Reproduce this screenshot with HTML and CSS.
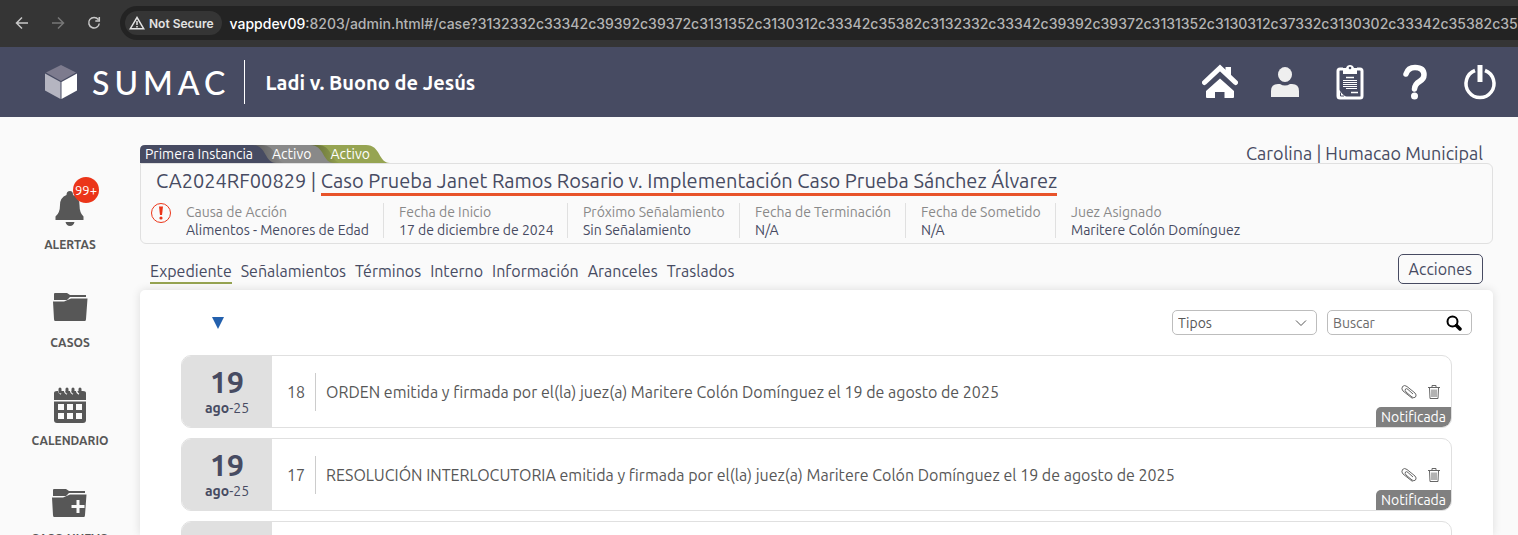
FILE: index.html
```
<!DOCTYPE html>
<html lang="es">
<head>
  <meta charset="utf-8">
  <meta name="viewport" content="width=device-width, initial-scale=1">
  <title>SUMAC</title>
  <link rel="stylesheet" href="styles.css">
</head>
<body>
  <div class="browser-bar">
    <button class="browser-btn" aria-label="Back">
      <svg width="16" height="16" viewBox="0 0 16 16"><path d="M14 8H3M8 2.500L2.500 8L8 13.500"/></svg>
    </button>
    <button class="browser-btn disabled" aria-label="Forward">
      <svg width="16" height="16" viewBox="0 0 16 16"><path d="M2 8H13M8 2.500L13.500 8L8 13.500"/></svg>
    </button>
    <button class="browser-btn" aria-label="Reload">
      <svg width="16" height="16" viewBox="0 0 16 16"><path d="M12.300 4.500A5.300 5.300 0 1 0 13.300 8.500M13.300 2V6H9.300"/></svg>
    </button>
    <div class="address">
      <button class="security">
        <svg width="16" height="14" viewBox="0 0 16 14"><path d="M8 1.500L14.700 12.700H1.300Z"/><path d="M8 5V9M8 10V11.500"/></svg>
        Not Secure
      </button>
      <span class="url"><span class="host">vappdev09</span>:8203/admin.html#/case?3132332c33342c39392c39372c3131352c3130312c33342c35382c3132332c33342c39392c39372c3131352c3130312c37332c3130302c33342c35382c353</span>
    </div>
  </div>

  <header class="header">
    <a href="#" class="logo">
      <svg width="34" height="36" viewBox="0 0 34 36">
        <path d="M17 1L32 8.500L17 17L2 8.500Z" fill="#7d7b8e"/>
        <path d="M1 9.500L16.500 18V35L1 26.500Z" fill="#b5b5c1"/>
        <path d="M33 9.500L17.500 18V35L33 26.500Z" fill="#fff"/>
      </svg>
      <span class="logo-text">SUMAC</span>
    </a>
    <h1 class="header-title">Ladi v. Buono de Jesús</h1>
    <nav class="header-nav">
      <a href="#" aria-label="Inicio">
        <svg width="36" height="36" viewBox="0 0 36 36">
          <path d="M2.500 18.500L18 4L33.500 18.500" fill="none" stroke="#fff" stroke-width="5" stroke-linecap="round"/>
          <path d="M23.500 3H29V12L23.500 7Z" fill="#fff"/>
          <path d="M18 14.500L32 27V33Q32 34 31 34H22.500V28H13V34H5Q4 34 4 33V27Z" fill="#fff"/>
        </svg>
      </a>
      <a href="#" aria-label="Perfil">
        <svg width="36" height="36" viewBox="0 0 36 36" fill="#efefef">
          <ellipse cx="18" cy="10.500" rx="7" ry="7.500"/>
          <path d="M4 33V27Q4 20 11 20H13Q18 23 23 20H25Q32 20 32 27V33Z"/>
        </svg>
      </a>
      <a href="#" aria-label="Tareas">
        <svg width="36" height="36" viewBox="0 0 36 36" fill="none" stroke="#fff">
          <path d="M11 5H8Q6 5 6 7V32Q6 34 8 34H28Q30 34 30 32V7Q30 5 28 5H25" stroke-width="3"/>
          <path d="M11 10V4H14Q15 1 18 1Q21 1 22 4H25V10Z" fill="#fff" stroke="none"/>
          <circle cx="18" cy="4" r="1.300" fill="#474b62" stroke="none"/>
          <path d="M14 13.500H22M19 28.500H26" stroke-width="1.500"/>
          <path d="M11 16.500H25M11 18.500H25M11 20.500H25M11 22.500H25M14 24.500H25"/>
          <path d="M6 24Q10 31 16 34H6Z" fill="#fff" stroke="none"/>
          <path d="M8.500 28.500V32H12" stroke="#474b62"/>
        </svg>
      </a>
      <a href="#" aria-label="Ayuda">
        <svg width="36" height="36" viewBox="0 0 36 36">
          <path d="M9 10Q11 3.500 18 3.500Q27 3.500 27 11Q27 15 22.500 17.500Q18 20 17.500 25" fill="none" stroke="#fff" stroke-width="5.500" stroke-linecap="round"/>
          <circle cx="17.500" cy="32" r="3.500" fill="#fff"/>
        </svg>
      </a>
      <a href="#" aria-label="Salir">
        <svg width="36" height="36" viewBox="0 0 36 36" fill="none" stroke="#fff">
          <path d="M13 6.500A14 14 0 1 0 23 6.500" stroke-width="3.500"/>
          <path d="M18 1V18" stroke-width="5"/>
        </svg>
      </a>
    </nav>
  </header>

  <div class="layout">
    <nav class="sidebar">
      <a href="#" class="side-link">
        <span class="side-icon">
          <svg width="36" height="40" viewBox="0 0 36 40" fill="#575757">
            <path d="M14.500 6Q14.500 2 18 2Q21 2 21 6Q27.500 8.500 27.500 16Q27.500 24 31.500 27.500V31H3.500V27.500Q8 24 8 16Q8 8.500 14.500 6Z"/>
            <path d="M13.500 33H22.500Q21.500 37 18 37Q14.500 37 13.500 33Z"/>
          </svg>
          <span class="alert-count">99+</span>
        </span>
        ALERTAS
      </a>
      <a href="#" class="side-link">
        <span class="side-icon">
          <svg width="36" height="40" viewBox="0 0 36 40" fill="#575757">
            <path d="M2 13V7Q2 6 3 6H15L18 8H34V10H18L15 13Z"/>
            <path d="M1 14.500H12L19 11.500H35.500L34 32Q34 34 33 34H3Q2 34 2 32Z"/>
          </svg>
        </span>
        CASOS
      </a>
      <a href="#" class="side-link">
        <span class="side-icon">
          <svg width="36" height="40" viewBox="0 0 36 40">
            <path d="M2 15V8Q2 6 5 6H31Q34 6 34 8V15Z" fill="#575757"/>
            <path d="M2 16.500H34V35Q34 38 31 38H5Q2 38 2 35Z" fill="#575757"/>
            <path d="M9 9Q5 7 8 3.500M15 9Q11 7 14 3.500M21 9Q17 7 20 3.500M27 9Q23 7 26 3.500" fill="none" stroke="#fafafa" stroke-width="1.500"/>
            <path d="M8 7V4M15 7V4M21 7V4M28 7V4" fill="none" stroke="#575757" stroke-width="3" stroke-linecap="round"/>
            <path d="M6 19H12V25H6ZM15 19H21V25H15ZM24 19H30V25H24ZM6 28H12V34H6ZM15 28H21V34H15ZM24 28H30V34H24Z" fill="#fafafa"/>
          </svg>
        </span>
        CALENDARIO
      </a>
      <a href="#" class="side-link">
        <span class="side-icon">
          <svg width="36" height="40" viewBox="0 0 36 40" fill="#575757">
            <path d="M1 13V7Q1 6 2 6H14L17 8H33V10H17L14 13Z"/>
            <path d="M0 14.500H11L18 11.500H34.500L33 32Q33 34 32 34H2Q1 34 1 32Z"/>
            <path d="M26 17V30M19.500 23.500H32.500" stroke="#fafafa" stroke-width="3"/>
          </svg>
        </span>
        CASO NUEVO
      </a>
    </nav>

    <main class="main">
      <div class="case-top">
        <div class="status-tabs">
          <svg class="status-shape" width="250" height="18" viewBox="0 0 250 18">
            <defs>
              <linearGradient id="shade" x1="0" x2="1">
                <stop offset="0" stop-color="#000" stop-opacity=".4"/>
                <stop offset="1" stop-color="#000" stop-opacity="0"/>
              </linearGradient>
            </defs>
            <path d="M150 0H226C241 0 238 18 250 18H150Z" fill="#96a452"/>
            <path d="M165 0H178C193 0 190 18 202 18H165Z" fill="url(#shade)"/>
            <path d="M100 0H170C185 0 182 18 194 18H100Z" fill="#898989"/>
            <path d="M105 0H122C137 0 134 18 146 18H105Z" fill="url(#shade)"/>
            <path d="M0 18V5Q0 0 5 0H112C127 0 124 18 136 18Z" fill="#474b62"/>
          </svg>
          <span>Primera Instancia</span>
          <span>Activo</span>
          <span>Activo</span>
        </div>
        <div class="court">Carolina | Humacao Municipal</div>
      </div>

      <section class="case-card">
        <h2 class="case-title">CA2024RF00829 | <a href="#">Caso Prueba Janet Ramos Rosario v. Implementación Caso Prueba Sánchez Álvarez</a></h2>
        <div class="case-data">
          <svg class="warning" width="22" height="22" viewBox="0 0 22 22">
            <circle cx="10" cy="10" r="9.500" fill="none" stroke="#eb3519"/>
            <path d="M8 3.500H12L11 12H9Z" fill="#eb3519"/>
            <circle cx="10" cy="15" r="1.600" fill="#eb3519"/>
          </svg>
          <dl class="fields">
            <div><dt>Causa de Acción</dt><dd>Alimentos - Menores de Edad</dd></div>
            <div><dt>Fecha de Inicio</dt><dd>17 de diciembre de 2024</dd></div>
            <div><dt>Próximo Señalamiento</dt><dd>Sin Señalamiento</dd></div>
            <div><dt>Fecha de Terminación</dt><dd>N/A</dd></div>
            <div><dt>Fecha de Sometido</dt><dd>N/A</dd></div>
            <div><dt>Juez Asignado</dt><dd>Maritere Colón Domínguez</dd></div>
          </dl>
        </div>
      </section>

      <div class="toolbar">
        <nav class="tabs">
          <a href="#" class="active">Expediente</a>
          <a href="#">Señalamientos</a>
          <a href="#">Términos</a>
          <a href="#">Interno</a>
          <a href="#">Información</a>
          <a href="#">Aranceles</a>
          <a href="#">Traslados</a>
        </nav>
        <button class="actions">Acciones</button>
      </div>

      <section class="panel">
        <div class="filters">
          <button class="sort" aria-label="Ordenar">
            <svg width="12" height="12" viewBox="0 0 12 12"><path d="M0 0H12L6 12Z" fill="#2360ad"/></svg>
          </button>
          <div class="field">
            <select aria-label="Tipos">
              <option>Tipos</option>
            </select>
            <svg width="12" height="8" viewBox="0 0 12 8"><path d="M1 1.500L6 6.500L11 1.500" fill="none" stroke="#575757"/></svg>
          </div>
          <div class="field">
            <input type="text" placeholder="Buscar" aria-label="Buscar">
            <svg width="16" height="16" viewBox="0 0 16 16"><circle cx="6.500" cy="6.500" r="5" fill="none" stroke="#000" stroke-width="2"/><path d="M10.500 10.500L14 14" stroke="#000" stroke-width="3.500" stroke-linecap="round"/></svg>
          </div>
        </div>

        <ul class="entries">
          <li class="entry">
            <div class="date"><strong>19</strong><span><b>ago</b>-25</span></div>
            <span class="number">18</span>
            <p class="description">ORDEN emitida y firmada por el(la) juez(a) Maritere Colón Domínguez el 19 de agosto de 2025</p>
            <button class="entry-btn" aria-label="Adjuntos">
              <svg width="16" height="16" viewBox="0 0 16 16"><path d="M11.500 14.500L2 7Q0 5 1.500 2.500Q3.500 .5 6 2.500L14 9Q16 11 14.500 13Q13 14.500 11 13L5 8Q3.500 6.500 4.500 5Q5.500 4 7 5.500L12 10"/></svg>
            </button>
            <button class="entry-btn" aria-label="Eliminar">
              <svg width="14" height="16" viewBox="0 0 14 16"><path d="M1 3.500H13M5 3V1.500H9V3M2.500 4L3 14.500H11L11.500 4M5 5.500V13M7 5.500V13M9 5.500V13"/></svg>
            </button>
            <span class="badge">Notificada</span>
          </li>
          <li class="entry">
            <div class="date"><strong>19</strong><span><b>ago</b>-25</span></div>
            <span class="number">17</span>
            <p class="description">RESOLUCIÓN INTERLOCUTORIA emitida y firmada por el(la) juez(a) Maritere Colón Domínguez el 19 de agosto de 2025</p>
            <button class="entry-btn" aria-label="Adjuntos">
              <svg width="16" height="16" viewBox="0 0 16 16"><path d="M11.500 14.500L2 7Q0 5 1.500 2.500Q3.500 .5 6 2.500L14 9Q16 11 14.500 13Q13 14.500 11 13L5 8Q3.500 6.500 4.500 5Q5.500 4 7 5.500L12 10"/></svg>
            </button>
            <button class="entry-btn" aria-label="Eliminar">
              <svg width="14" height="16" viewBox="0 0 14 16"><path d="M1 3.500H13M5 3V1.500H9V3M2.500 4L3 14.500H11L11.500 4M5 5.500V13M7 5.500V13M9 5.500V13"/></svg>
            </button>
            <span class="badge">Notificada</span>
          </li>
          <li class="entry">
            <div class="date"></div>
          </li>
        </ul>
      </section>
    </main>
  </div>
</body>
</html>
```
FILE: styles.css
```
* {
  margin: 0;
  padding: 0;
  box-sizing: border-box;
}

body {
  height: 100vh;
  overflow: hidden;
  display: flex;
  flex-direction: column;
  background: #fafafa;
  color: #474b62;
  font-family: Ubuntu, "Noto Sans", sans-serif;
  font-size: 14px;
}

a {
  color: inherit;
  text-decoration: none;
}

button {
  background: none;
  border: none;
  color: inherit;
  font: inherit;
  cursor: pointer;
}

svg {
  display: block;
  flex-shrink: 0;
}

/* browser bar */
.browser-bar {
  display: flex;
  align-items: center;
  gap: 20px;
  flex-shrink: 0;
  padding: 6px 0 7px 14px;
  background: #353535;
  font-family: Inter, sans-serif;
}

.browser-btn svg {
  fill: none;
  stroke: #c7c7c7;
  stroke-width: 1.5;
}

.browser-btn.disabled svg {
  stroke: #777;
}

.address {
  flex: 1;
  min-width: 0;
  display: flex;
  align-items: center;
  gap: 8px;
  height: 34px;
  margin-left: -2px;
  padding-left: 5px;
  background: #232323;
  border-radius: 17px 0 0 17px;
  overflow: hidden;
}

.security {
  display: flex;
  align-items: center;
  gap: 4px;
  flex-shrink: 0;
  height: 24px;
  padding: 0 8px 0 4px;
  border-radius: 12px;
  background: #353535;
  color: #e3e3e3;
  font-size: 12px;
  font-weight: 600;
}

.security svg {
  fill: none;
  stroke: #e3e3e3;
  stroke-width: 1.5;
}

.url {
  color: #b4b4b4;
  font-size: 14px;
  font-weight: 500;
  white-space: nowrap;
}

.host {
  color: #fff;
}

/* header */
.header {
  display: flex;
  align-items: center;
  flex-shrink: 0;
  height: 70px;
  padding: 0 20px 0 44px;
  background: #474b62;
  color: #fff;
}

.logo {
  display: flex;
  align-items: center;
  gap: 14px;
  height: 44px;
  padding-right: 14px;
  border-right: 1px solid #fff;
}

.logo-text {
  font-family: Lato, sans-serif;
  font-size: 32px;
  font-weight: 500;
  letter-spacing: 5px;
}

.header-title {
  margin-left: 20px;
  font-size: 20px;
  font-weight: 700;
}

.header-nav {
  display: flex;
  gap: 29px;
  margin-left: auto;
}

/* sidebar */
.layout {
  display: flex;
  flex: 1;
  min-height: 0;
}

.sidebar {
  display: flex;
  flex-direction: column;
  gap: 34px;
  flex-shrink: 0;
  width: 140px;
  padding-top: 72px;
  overflow: hidden;
}

.side-link {
  display: flex;
  flex-direction: column;
  align-items: center;
  gap: 8px;
  flex-shrink: 0;
  color: #575757;
  font-size: 12px;
  font-weight: 600;
  line-height: 16px;
}

.side-icon {
  position: relative;
}

.alert-count {
  position: absolute;
  top: -12px;
  left: 21px;
  width: 26px;
  height: 26px;
  border-radius: 50%;
  background: #eb3519;
  color: #fff;
  font-size: 13px;
  font-weight: 400;
  line-height: 26px;
  text-align: center;
}

/* case summary */
.main {
  flex: 1;
  min-width: 0;
  display: flex;
  flex-direction: column;
  padding: 27px 25px 0 0;
}

.case-top {
  display: flex;
  align-items: flex-start;
  justify-content: space-between;
  height: 19px;
  padding-right: 10px;
}

.status-tabs {
  position: relative;
  display: flex;
  gap: 19px;
  height: 18px;
  margin-top: 1px;
  padding-left: 5px;
  color: #fff;
  line-height: 18px;
}

.status-tabs span {
  z-index: 1;
}

.status-shape {
  position: absolute;
  top: 0;
  left: 0;
}

.court {
  font-size: 18px;
  line-height: 18px;
}

.case-card {
  padding: 4px 10px 5px;
  border: 1px solid #e0e0e0;
  border-radius: 0 6px 6px 6px;
}

.case-title {
  padding-left: 5px;
  font-size: 20px;
  font-weight: 400;
  line-height: 25px;
}

.case-title a {
  display: inline-block;
  border-bottom: 3px solid #e8532a;
}

.case-data {
  display: flex;
  gap: 13px;
  margin-top: 7px;
}

.fields {
  display: grid;
  grid-template-columns: 197px 184px 172px 166px 150px auto;
  line-height: 18px;
  white-space: nowrap;
}

.fields div {
  height: 35px;
  padding-right: 15px;
}

.fields div + div {
  padding-left: 15px;
  border-left: 1px solid #e0e0e0;
}

.fields dt {
  color: #898989;
}

/* tabs */
.toolbar {
  display: flex;
  align-items: center;
  justify-content: space-between;
  padding: 10px 10px 6px;
}

.tabs {
  display: flex;
  gap: 9px;
  padding-top: 6px;
  font-size: 16px;
  line-height: 22px;
}

.tabs a {
  border-bottom: 2px solid transparent;
}

.tabs .active {
  border-color: #96a452;
}

.actions {
  height: 30px;
  padding: 0 10px;
  border: 1px solid #474b62;
  border-radius: 5px;
  font-size: 16px;
}

/* entries */
.panel {
  flex: 1;
  min-height: 0;
  padding: 20px 41px 0;
  border-radius: 5px 5px 0 0;
  background: #fff;
  box-shadow: 0 0 10px rgba(0, 0, 0, .12);
}

.filters {
  display: flex;
  align-items: center;
  gap: 10px;
  margin-right: -20px;
}

.sort {
  margin: 0 auto 0 31px;
}

.field {
  display: flex;
  align-items: center;
  gap: 8px;
  width: 145px;
  height: 25px;
  padding: 0 9px 0 5px;
  border: 1px solid #bdbdbd;
  border-radius: 5px;
}

.field select,
.field input {
  flex: 1;
  min-width: 0;
  appearance: none;
  background: none;
  border: none;
  color: #575757;
  font: inherit;
}

.field input::placeholder {
  color: #6b6b6b;
}

.entries {
  display: flex;
  flex-direction: column;
  gap: 10px;
  margin-top: 20px;
  list-style: none;
}

.entry {
  position: relative;
  display: flex;
  align-items: center;
  gap: 10px;
  height: 73px;
  padding-right: 10px;
  border: 1px solid #e0e0e0;
  border-radius: 10px;
  overflow: hidden;
  color: #575757;
  font-size: 16px;
}

.date {
  display: flex;
  flex-direction: column;
  align-items: center;
  justify-content: center;
  align-self: stretch;
  width: 90px;
  background: #e0e0e0;
  color: #474b62;
  font-size: 14px;
  line-height: 20px;
}

.date strong {
  font-size: 30px;
  line-height: 32px;
}

.number {
  padding: 0 10px 0 5px;
  border-right: 1px solid #ccc;
  line-height: 38px;
}

.description {
  flex: 1;
}

.entry-btn svg {
  fill: none;
  stroke: #666;
}

.badge {
  position: absolute;
  right: 0;
  bottom: 0;
  padding: 0 5px;
  border-radius: 5px 0 0 0;
  background: #808080;
  color: #fff;
  font-size: 14px;
  line-height: 20px;
}
```
